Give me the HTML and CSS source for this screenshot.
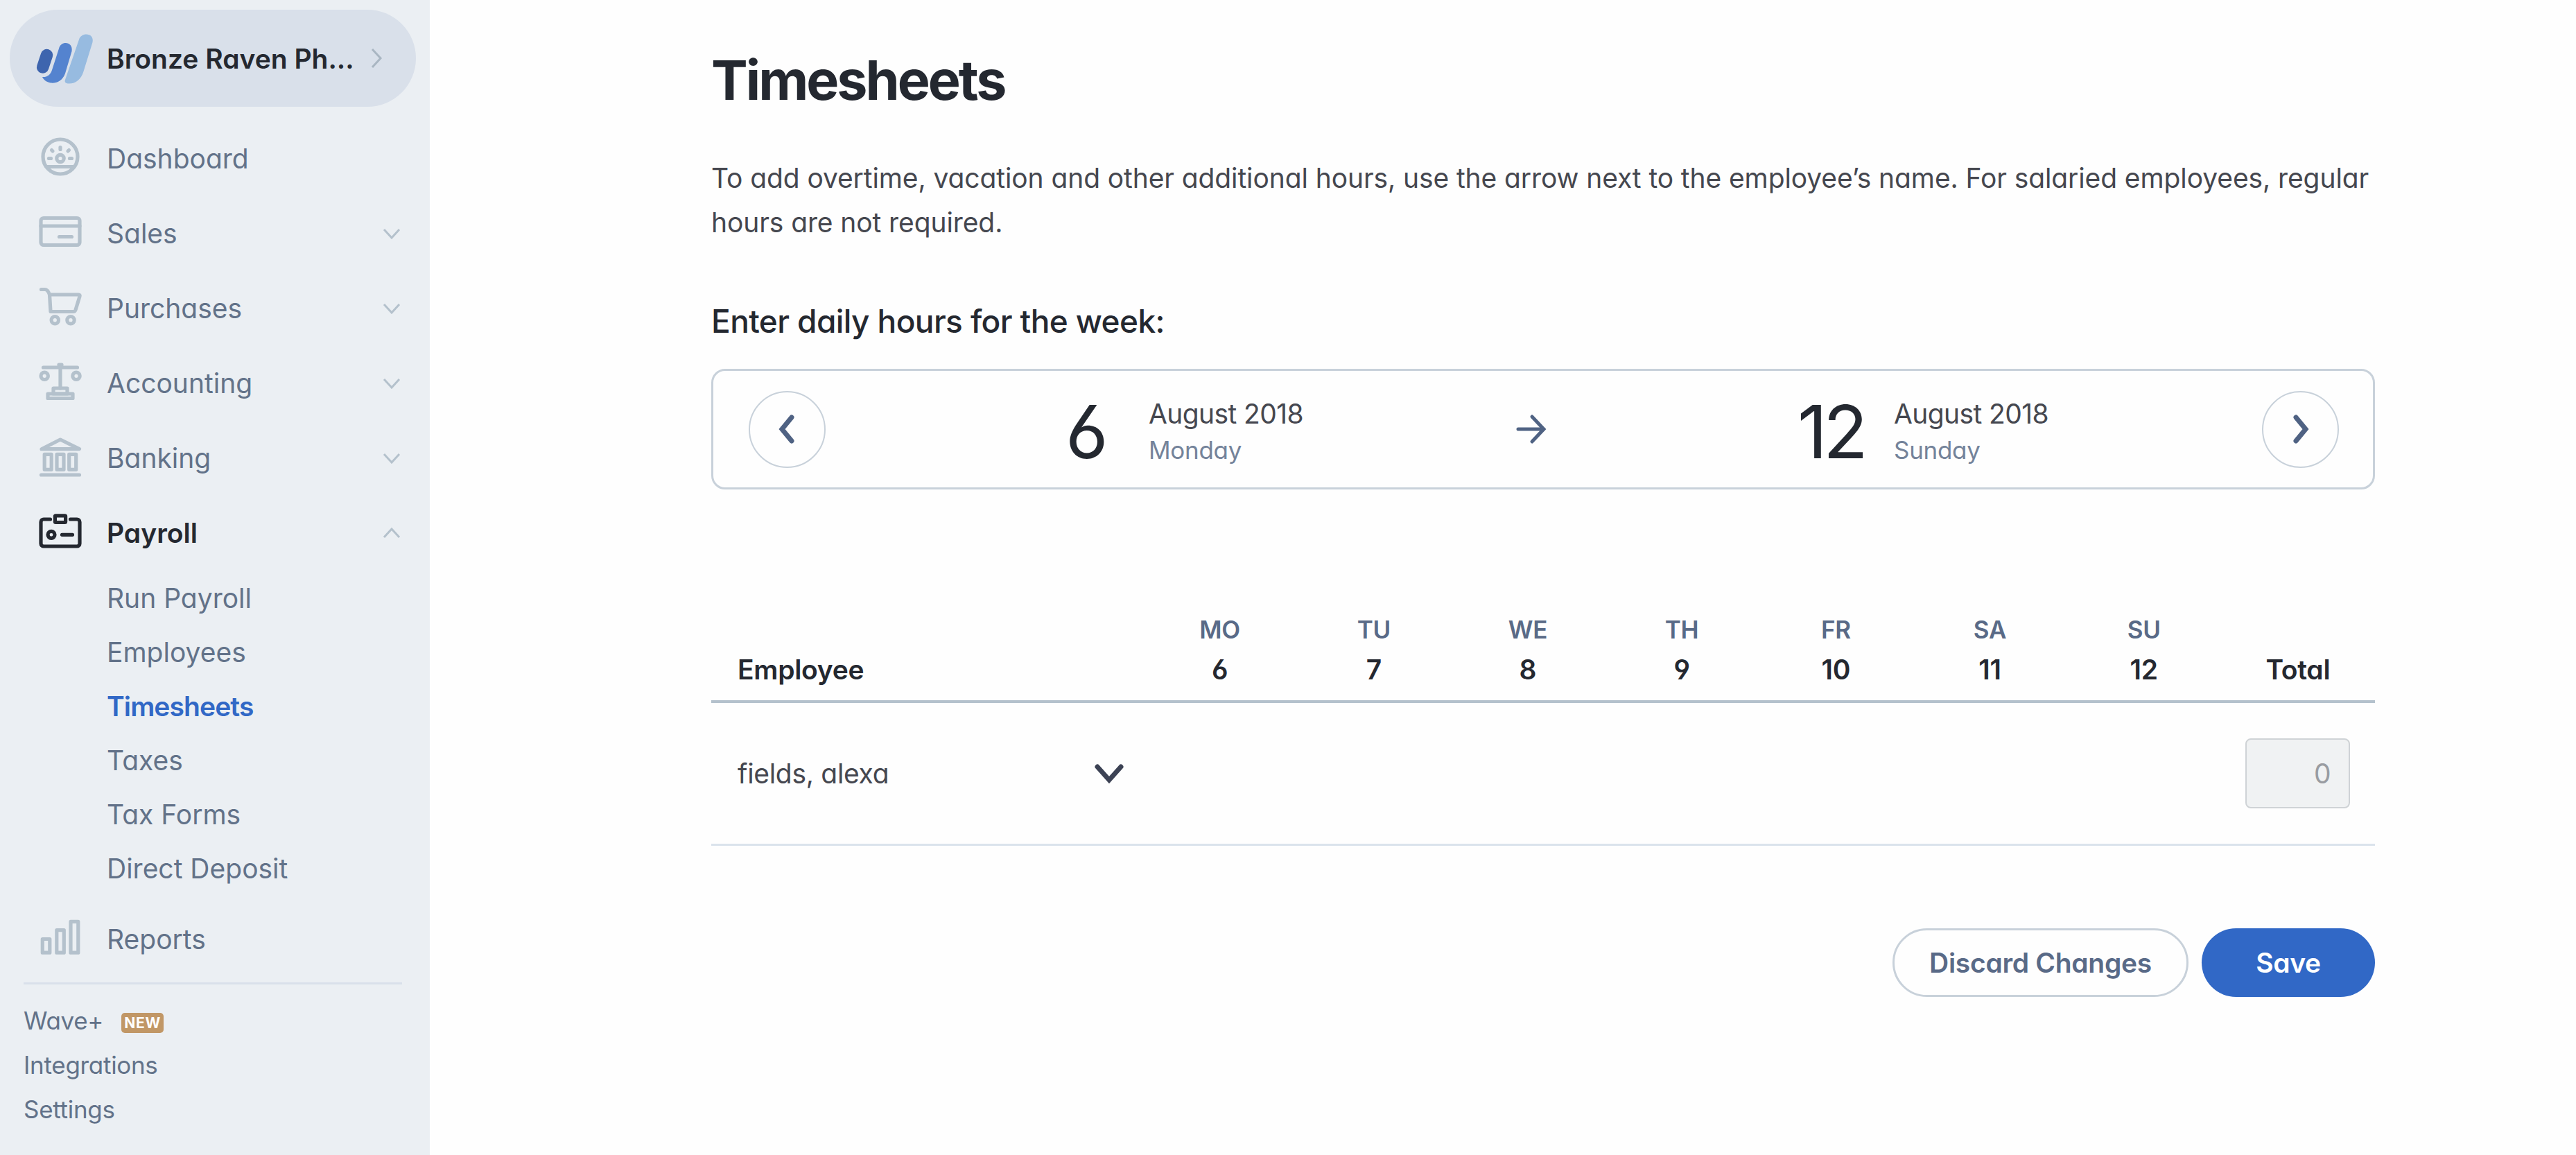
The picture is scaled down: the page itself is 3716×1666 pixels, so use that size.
FILE: index.html
```
<!DOCTYPE html>
<html lang="en">
<head>
    <meta charset="UTF-8">
    <meta name="viewport" content="width=device-width, initial-scale=1.0">
    <title>Timesheets</title>
    <link rel="stylesheet" href="styles.css">
</head>
<body>

<div class="sidebar">
    <div class="business">
        <svg class="logo" width="90" height="80" viewBox="50 44 90 80">
            <path d="M68.5 79.5L62.7 97" stroke="#3e65ae" stroke-width="17.5" stroke-linecap="round"/>
            <path d="M86 70C89 58 107 60 104.5 74L95 106C91 117 82 120.5 74 119.5C68 118.5 64 115 62 111C69 111.500 74 108 76 101Z" fill="#5483cf"/>
            <path d="M115 57C118 46 137.500 47 134.500 61L121.500 103C118 115 109 121.500 99 120.500C95 120 94 118 95 115Z" fill="#97bbe0"/>
        </svg>
        <span class="business-name">Bronze Raven Ph...</span>
        <svg class="business-arrow" width="18" height="30" viewBox="0 0 18 30"><path d="M2 2l12 13L2 28"/></svg>
    </div>

    <ul class="nav">
        <li>
            <svg class="icon" viewBox="0 0 72 72">
                <circle cx="36" cy="34" r="25"/>
                <circle cx="36" cy="36.500" r="5.200"/>
                <path d="M16 48.500h40M36 20.500v3M19.500 36.500h3M49.500 36.500h3M23.500 24.500l1.500 1.500M48.500 24.500L47 26"/>
            </svg>
            <span>Dashboard</span>
        </li>
        <li>
            <svg class="icon" viewBox="0 0 72 72">
                <rect x="8" y="14.500" width="56" height="39" rx="4"/>
                <path d="M8 26h56M34.500 41.500h18"/>
            </svg>
            <span>Sales</span>
            <svg class="chevron" viewBox="0 0 26 16"><path d="M2 2l11 12L24 2"/></svg>
        </li>
        <li>
            <svg class="icon" viewBox="0 0 72 72">
                <path d="M8.500 9.500h5c4 0 5.500 3 7 7.500L22 41.500h33c1.500 0 2.500-1 3-2.500L64 19.500c.5-1.500 0-2.500-1.500-2.500H20.500"/>
                <circle cx="28.300" cy="53.700" r="5.200"/>
                <circle cx="51" cy="53.700" r="5.200"/>
            </svg>
            <span>Purchases</span>
            <svg class="chevron" viewBox="0 0 26 16"><path d="M2 2l11 12L24 2"/></svg>
        </li>
        <li>
            <svg class="icon" viewBox="0 0 72 72">
                <path d="M11.500 14h49M36 10v34M34 10h4"/>
                <circle cx="13.200" cy="26.300" r="5.200"/>
                <circle cx="59" cy="26.300" r="5.200"/>
                <rect x="26" y="44" width="20" height="8"/>
                <rect x="18" y="52" width="36" height="6.500"/>
            </svg>
            <span>Accounting</span>
            <svg class="chevron" viewBox="0 0 26 16"><path d="M2 2l11 12L24 2"/></svg>
        </li>
        <li>
            <svg class="icon" viewBox="0 0 72 72">
                <path d="M9 23.700L36 10l27.500 13.700zM8.500 61h55"/>
                <rect x="13.200" y="31.300" width="10" height="22"/>
                <rect x="31" y="31.300" width="10" height="22"/>
                <rect x="48.700" y="31.300" width="10" height="22"/>
            </svg>
            <span>Banking</span>
            <svg class="chevron" viewBox="0 0 26 16"><path d="M2 2l11 12L24 2"/></svg>
        </li>
        <li class="open">
            <svg class="icon" viewBox="0 0 72 72">
                <path d="M21.500 17H12a4 4 0 0 0-4 4v31a4 4 0 0 0 4 4h48a4 4 0 0 0 4-4V21a4 4 0 0 0-4-4h-9.500M38.500 39.300h15"/>
                <rect x="28.400" y="11.800" width="15.200" height="9.700" rx="1"/>
                <circle cx="23" cy="39.300" r="5"/>
            </svg>
            <span>Payroll</span>
            <svg class="chevron" viewBox="0 0 26 16"><path d="M2 14L13 2l11 12"/></svg>
        </li>
    </ul>
    <ul class="subnav">
        <li>Run Payroll</li>
        <li>Employees</li>
        <li class="current">Timesheets</li>
        <li>Taxes</li>
        <li>Tax Forms</li>
        <li>Direct Deposit</li>
    </ul>
    <ul class="nav">
        <li>
            <svg class="icon" viewBox="0 0 72 72">
                <rect x="10.300" y="36.500" width="10.500" height="19.700"/>
                <rect x="30.800" y="23.700" width="10.500" height="32.500"/>
                <rect x="51" y="11.400" width="10.800" height="44.800"/>
            </svg>
            <span>Reports</span>
        </li>
    </ul>

    <ul class="footer-links">
        <li>Wave+ <span class="badge">NEW</span></li>
        <li>Integrations</li>
        <li>Settings</li>
    </ul>
</div>

<div class="main">
    <h1>Timesheets</h1>
    <p class="intro">To add overtime, vacation and other additional hours, use the arrow next to the employee’s name. For salaried employees, regular hours are not required.</p>

    <h2>Enter daily hours for the week:</h2>
    <div class="week">
        <button class="round"><svg width="32" height="48" viewBox="0 0 32 48"><path d="M22 7L8 24l14 17"/></svg></button>
        <div class="date date-from">
            <span class="day">6</span>
            <div>
                <div class="month">August 2018</div>
                <div class="weekday">Monday</div>
            </div>
        </div>
        <svg class="to" width="44" height="44" viewBox="0 0 44 44"><path d="M3 22h37M23 4l17 18-17 18"/></svg>
        <div class="date date-to">
            <span class="day">12</span>
            <div>
                <div class="month">August 2018</div>
                <div class="weekday">Sunday</div>
            </div>
        </div>
        <button class="round"><svg width="32" height="48" viewBox="0 0 32 48"><path d="M9 7l14 17L9 41"/></svg></button>
    </div>

    <table>
        <thead>
            <tr>
                <th class="employee">Employee</th>
                <th><span>MO</span>6</th>
                <th><span>TU</span>7</th>
                <th><span>WE</span>8</th>
                <th><span>TH</span>9</th>
                <th><span>FR</span>10</th>
                <th><span>SA</span>11</th>
                <th><span>SU</span>12</th>
                <th>Total</th>
            </tr>
        </thead>
        <tbody>
            <tr>
                <td class="employee">
                    <div class="name">
                        fields, alexa
                        <svg width="44" height="30" viewBox="0 0 44 30"><path d="M5 6l17 19L39 6"/></svg>
                    </div>
                </td>
                <td></td>
                <td></td>
                <td></td>
                <td></td>
                <td></td>
                <td></td>
                <td></td>
                <td><input type="text" class="total" value="0" disabled></td>
            </tr>
        </tbody>
    </table>

    <div class="actions">
        <button class="discard">Discard Changes</button>
        <button class="save">Save</button>
    </div>
</div>

</body>
</html>
```
FILE: styles.css
```
* {
    box-sizing: border-box;
}
body {
    margin: 0;
    display: flex;
    min-height: 1666px;
    font-family: Inter, Lato, sans-serif;
    font-feature-settings: "cv11", "cv03", "cv04";
    font-size: 39px;
    letter-spacing: -0.3px;
    color: #45474f;
    background-color: #fefefe;
}
ul {
    list-style: none;
    margin: 0;
    padding: 0;
}
svg {
    fill: none;
    flex: none;
}
button, input {
    font: inherit;
    letter-spacing: inherit;
}

/* sidebar */
.sidebar {
    width: 620px;
    flex: none;
    background-color: #ebeff3;
    color: #627289;
}
.business {
    display: flex;
    align-items: center;
    height: 140px;
    margin: 14px 20px 20px 14px;
    padding-left: 35px;
    border-radius: 70px;
    background-color: #d9e0ea;
}
.business-name {
    width: 368px;
    margin-left: 15px;
    font-weight: 600;
    letter-spacing: 0;
    color: #242830;
}
.business-arrow {
    margin-left: 13px;
    stroke: #a9b6c2;
    stroke-width: 3;
}
.nav li {
    display: flex;
    align-items: center;
    height: 108px;
    padding-left: 51px;
}
.nav span {
    flex: 1;
    margin-left: 31px;
    letter-spacing: 0;
}
.icon {
    width: 72px;
    height: 72px;
    stroke: #b4c1cc;
    stroke-width: 5.2;
    stroke-linecap: round;
    stroke-linejoin: round;
}
.chevron {
    width: 26px;
    height: 16px;
    margin: 2px 42px 0 0;
    stroke: #b4c1cc;
    stroke-width: 3;
}
.open {
    font-weight: 600;
    color: #242830;
}
.open .icon {
    stroke: #242830;
}
.subnav {
    padding: 2px 0 8px;
}
.subnav li {
    height: 78px;
    line-height: 78px;
    padding-left: 154px;
    letter-spacing: 0;
}
.subnav .current {
    font-weight: 600;
    letter-spacing: -0.9px;
    color: #3168c6;
}
.footer-links {
    margin: 9px 40px 0 34px;
    padding-top: 20px;
    border-top: 3px solid #d9e0ea;
    font-size: 35px;
}
.footer-links li {
    display: flex;
    align-items: center;
    height: 64px;
}
.badge {
    width: 61px;
    height: 29px;
    margin: 6px 0 0 26px;
    border-radius: 5px;
    background-color: #c19766;
    color: #fff;
    font-size: 21px;
    font-weight: 700;
    line-height: 29px;
    letter-spacing: 0.8px;
    text-align: center;
}

/* page content */
.main {
    width: 2400px;
    margin-left: 406px;
    padding-top: 67px;
}
h1 {
    margin: 0;
    font-size: 79px;
    font-weight: 700;
    line-height: 96px;
    letter-spacing: -3px;
    color: #242830;
}
.intro {
    margin: 62px 0 0;
    line-height: 64px;
    letter-spacing: -0.1px;
}
h2 {
    margin: 80px 0 39px;
    font-size: 46px;
    font-weight: 500;
    line-height: 60px;
    letter-spacing: -0.6px;
    color: #242830;
}
.week {
    display: flex;
    align-items: center;
    height: 174px;
    padding: 0 49px 0 51px;
    border: 3px solid #c8d1da;
    border-radius: 20px;
}
.round {
    display: flex;
    align-items: center;
    justify-content: center;
    width: 111px;
    height: 111px;
    padding: 0;
    border: 2px solid #c8d1da;
    border-radius: 50%;
    background: none;
}
.round svg {
    stroke: #4f6283;
    stroke-width: 7;
    stroke-linecap: round;
}
.date {
    display: flex;
    align-items: center;
    padding-top: 8px;
}
.day {
    font-size: 106px;
    line-height: 110px;
    letter-spacing: -6px;
    color: #242830;
}
.date-from {
    width: 650px;
    margin-left: 346px;
}
.date-to {
    margin: 0 auto 0 362px;
}
.date-from .day {
    width: 120px;
}
.date-to .day {
    width: 139px;
}
.month {
    line-height: 52px;
    letter-spacing: -0.6px;
}
.weekday {
    font-size: 35px;
    line-height: 52px;
    color: #74839a;
}
.to {
    stroke: #4f6283;
    stroke-width: 5;
    stroke-linecap: round;
}

/* hours table */
table {
    width: 2400px;
    margin-top: 174px;
    border-collapse: collapse;
    table-layout: fixed;
}
th {
    width: 222px;
    padding: 0 0 16px;
    border-bottom: 4px solid #b4c1cc;
    font-weight: 600;
    line-height: 57px;
    vertical-align: bottom;
    color: #242830;
}
th span {
    display: block;
    font-size: 35px;
    color: #596a87;
}
.employee {
    width: 622px;
    padding-left: 38px;
    text-align: left;
}
td {
    height: 206px;
    padding: 0;
    border-bottom: 3px solid #dbe3ec;
    text-align: center;
}
.name {
    display: flex;
    align-items: center;
    justify-content: space-between;
    padding-right: 27px;
}
.name svg {
    stroke: #3c4254;
    stroke-width: 7;
    stroke-linecap: round;
}
.total {
    display: block;
    width: 151px;
    height: 101px;
    margin: 0 auto;
    padding: 0 26px;
    border: 2px solid #cfd3d6;
    border-radius: 8px;
    background-color: #f0f2f3;
    color: #999ca1;
    text-align: right;
}

.actions {
    display: flex;
    justify-content: flex-end;
    gap: 19px;
    margin-top: 119px;
}
.actions button {
    height: 99px;
    padding: 0;
    border-radius: 50px;
    font-weight: 600;
}
.discard {
    width: 427px;
    border: 3px solid #c8d1da;
    background: none;
    color: #596a87;
}
.save {
    width: 250px;
    border: none;
    background-color: #3168c6;
    color: #fff;
}
```
